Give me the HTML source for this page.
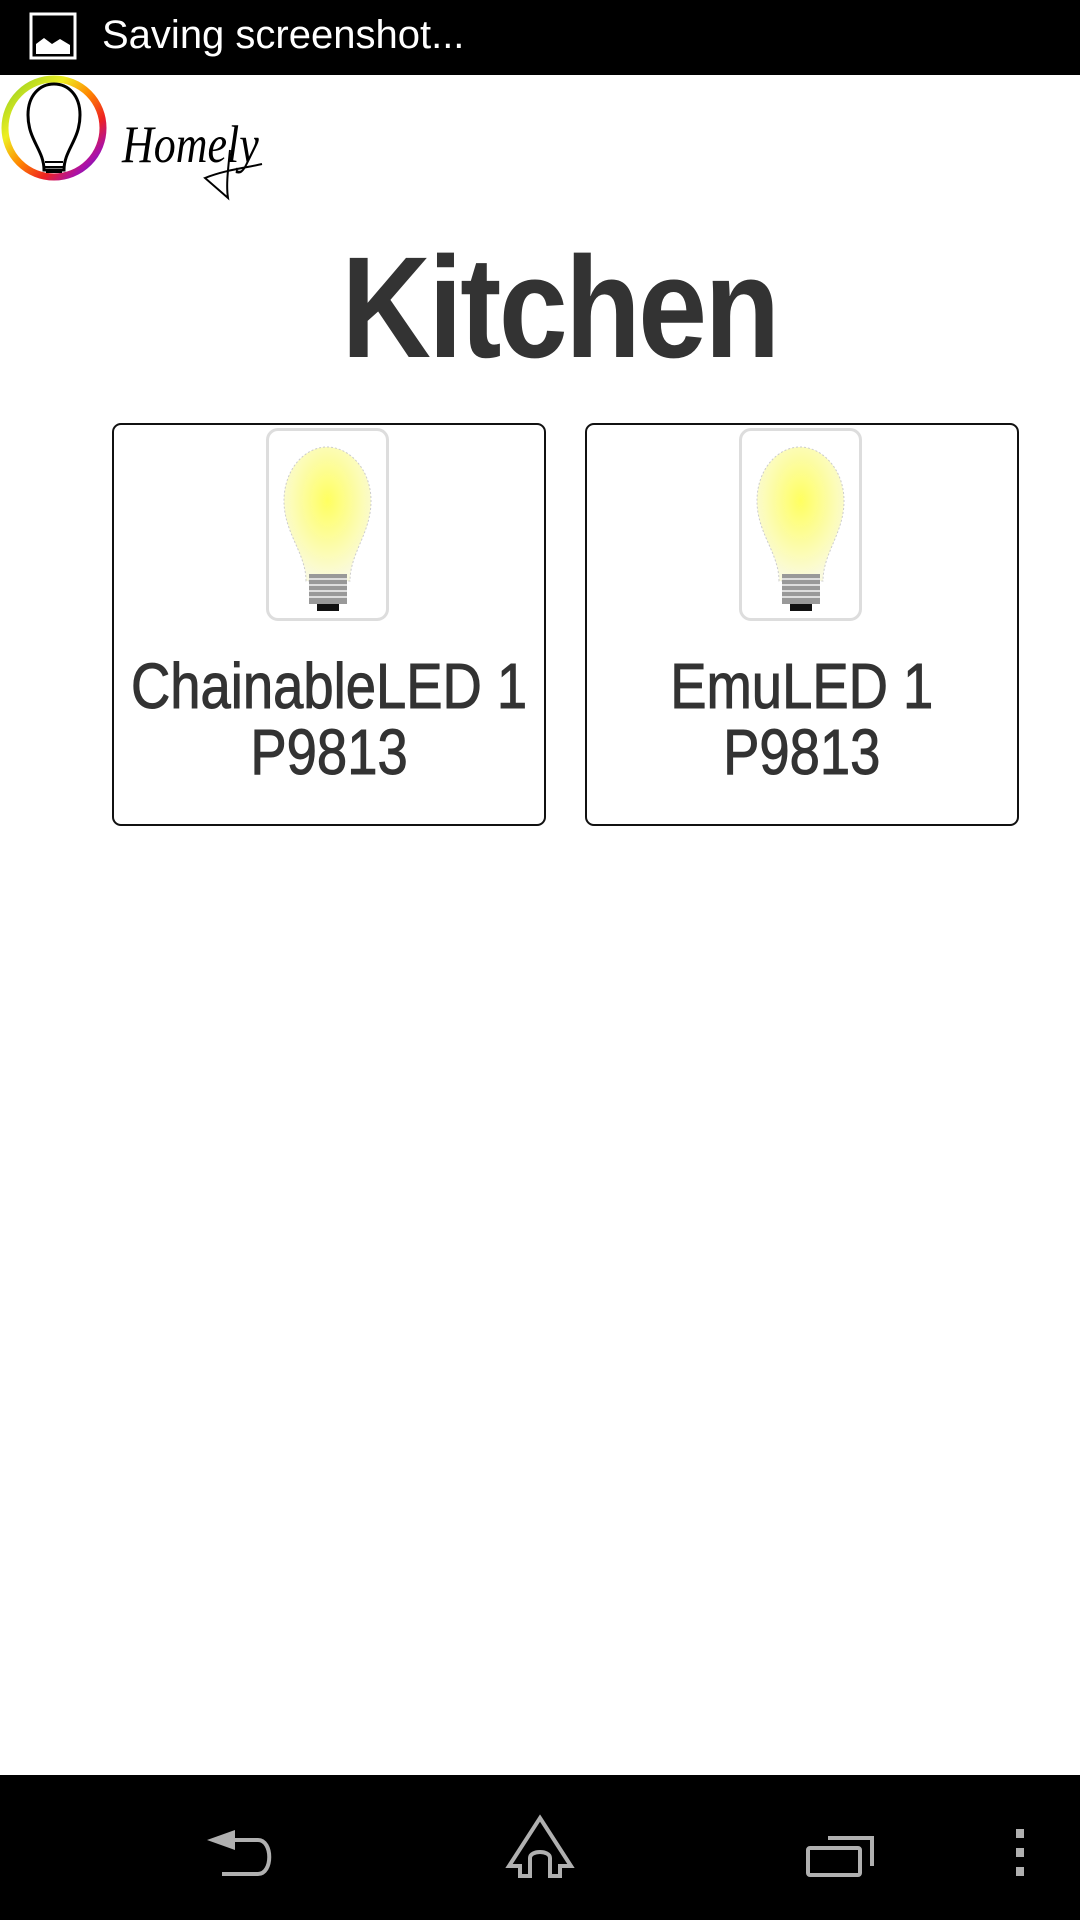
<!DOCTYPE html>
<html><head><meta charset="utf-8"><style>
html,body{margin:0;padding:0;}
body{width:1080px;height:1920px;position:relative;background:#fff;overflow:hidden;font-family:"Liberation Sans",sans-serif;}
.status{position:absolute;left:0;top:0;width:1080px;height:75px;background:#000;}
.status .t{position:absolute;left:102px;top:10px;color:#fff;font-size:40px;line-height:50px;}
.nav{position:absolute;left:0;top:1775px;width:1080px;height:145px;background:#000;}
.title{position:absolute;left:0;width:1120px;top:228px;text-align:center;line-height:160px;}
.title span{display:inline-block;font-size:144px;font-weight:bold;color:#333;letter-spacing:-3px;transform:scaleX(0.86);}
.card{position:absolute;top:423px;width:430px;height:399px;border:2.5px solid #111;border-radius:9px;}
.img{position:absolute;left:152px;top:3px;width:123px;height:193px;border:3px solid #ddd;border-radius:12px;box-sizing:border-box;}
.lbl{position:absolute;left:-40px;width:510px;top:228px;text-align:center;font-size:64px;line-height:66px;color:#333;white-space:nowrap;-webkit-text-stroke:1px #333;}
.lbl span{display:inline-block;transform:scaleX(0.85);}
</style></head><body>
<div class="status">
<svg style="position:absolute;left:29px;top:12px" width="48" height="48" viewBox="0 0 48 48"><rect x="2" y="2" width="44" height="44" fill="none" stroke="#fff" stroke-width="3"/><path d="M7 42 V32 L15 26 L23 32 L31 27 L41 33 V42 Z" fill="#fff"/></svg>
<div class="t">Saving screenshot...</div>
</div>
<svg style="position:absolute;left:0;top:75px" width="270" height="130" viewBox="0 75 270 130">
<defs><linearGradient id="g" x1="0" y1="0" x2="1" y2="1"><stop offset="0" stop-color="#8c2"/><stop offset=".3" stop-color="#ee2"/><stop offset=".5" stop-color="#f80"/><stop offset=".7" stop-color="#e22"/><stop offset=".85" stop-color="#a1a"/><stop offset="1" stop-color="#22c"/></linearGradient></defs>
<circle cx="54" cy="128" r="49" fill="none" stroke="url(#g)" stroke-width="7"/>
<path d="M44 170 C44 150 28 140 28 115 C28 95 40 84 54 84 C68 84 80 95 80 115 C80 140 64 150 64 170 Z" fill="#fff" stroke="#000" stroke-width="3"/>
<path d="M45 162 H63 M45 167 H63 M46 172 H62" stroke="#000" stroke-width="2"/>
<text x="122" y="162" font-family="Liberation Serif,serif" font-style="italic" font-size="44" fill="#000" transform="scale(1,1.2) translate(0,-27)">Homely</text>
<path d="M230 150 C228 170 226 185 228 198 L205 178 C225 170 245 168 262 164" fill="none" stroke="#000" stroke-width="2"/>
</svg>
<div class="title"><span>Kitchen</span></div>
<div class="card" style="left:112px"><div class="img"><svg width="117" height="187" viewBox="0 0 117 187"><defs><radialGradient id="b" cx=".5" cy=".4" r=".6"><stop offset="0" stop-color="#ffff60"/><stop offset="1" stop-color="#fafae0"/></radialGradient></defs><path d="M37 150 C37 122 15 102 15 70 C15 38 36 16 58 16 C80 16 102 38 102 70 C102 102 81 122 81 150 Z" fill="url(#b)" stroke="#ccc" stroke-dasharray="2 2"/><rect x="40" y="143" width="38" height="30" fill="#999"/><path d="M40 148 H78 M40 154 H78 M40 160 H78 M40 166 H78" stroke="#ddd" stroke-width="2"/><rect x="48" y="173" width="22" height="7" fill="#111"/></svg></div><div class="lbl"><span>ChainableLED 1<br>P9813</span></div></div>
<div class="card" style="left:585px"><div class="img"><svg width="117" height="187" viewBox="0 0 117 187"><path d="M37 150 C37 122 15 102 15 70 C15 38 36 16 58 16 C80 16 102 38 102 70 C102 102 81 122 81 150 Z" fill="url(#b)" stroke="#ccc" stroke-dasharray="2 2"/><rect x="40" y="143" width="38" height="30" fill="#999"/><path d="M40 148 H78 M40 154 H78 M40 160 H78 M40 166 H78" stroke="#ddd" stroke-width="2"/><rect x="48" y="173" width="22" height="7" fill="#111"/></svg></div><div class="lbl"><span>EmuLED 1<br>P9813</span></div></div>
<div class="nav">
<svg width="1080" height="145" viewBox="0 1775 1080 145">
<path d="M207 1840 L235 1830 V1850 Z" fill="#b0b0b0"/>
<path d="M233 1840 H258 C273 1840 273 1874 258 1874 H222" fill="none" stroke="#b0b0b0" stroke-width="4"/>
<path d="M540 1818 L571 1866 H560 V1876 H550 V1858 C550 1850 530 1850 530 1858 V1876 H520 V1866 H509 Z" fill="none" stroke="#b0b0b0" stroke-width="4"/>
<rect x="808" y="1848" width="52" height="27" rx="2" fill="none" stroke="#b0b0b0" stroke-width="4"/>
<path d="M828 1838 H872 V1866" fill="none" stroke="#b0b0b0" stroke-width="4"/>
<rect x="1016" y="1829" width="8" height="9" fill="#b0b0b0"/><rect x="1016" y="1848" width="8" height="9" fill="#b0b0b0"/><rect x="1016" y="1867" width="8" height="9" fill="#b0b0b0"/>
</svg>
</div>
</body></html>
